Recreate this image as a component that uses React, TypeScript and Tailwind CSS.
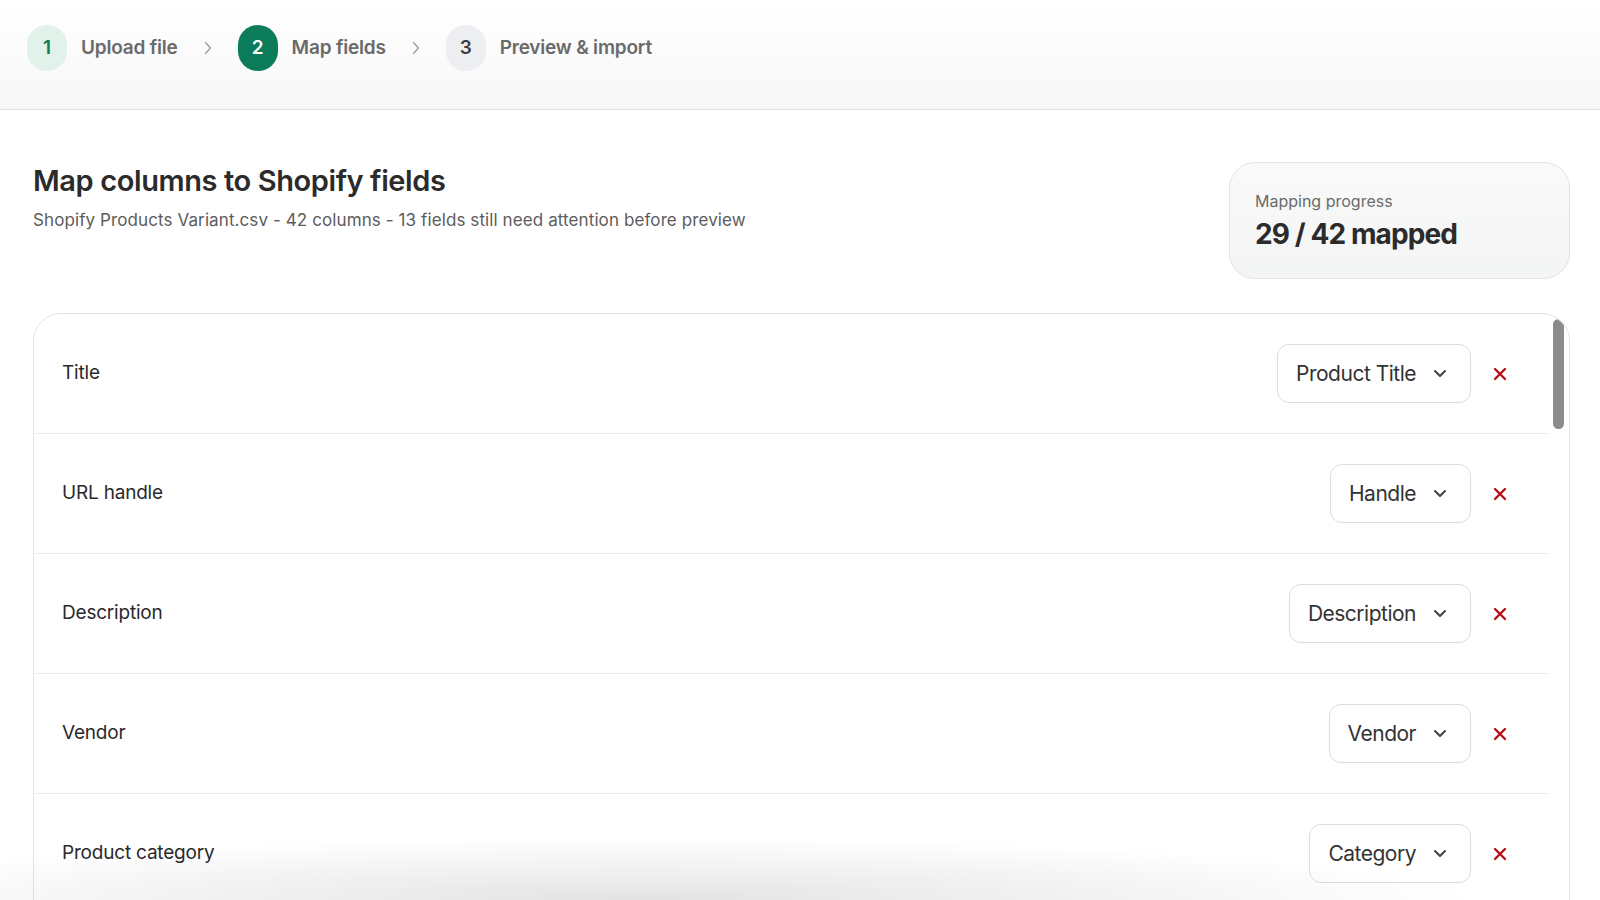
import React from "react";

const rows = [
  { label: "Title", value: "Product Title" },
  { label: "URL handle", value: "Handle" },
  { label: "Description", value: "Description" },
  { label: "Vendor", value: "Vendor" },
  { label: "Product category", value: "Category" },
];

function Chevron() {
  return (
    <svg width="14" height="9" viewBox="0 0 14 9" fill="none" className="shrink-0">
      <path d="M2 2l5 5 5-5" stroke="#444" strokeWidth="2" strokeLinecap="round" strokeLinejoin="round" />
    </svg>
  );
}

function XIcon() {
  return (
    <svg width="14" height="14" viewBox="0 0 14 14" fill="none" className="shrink-0">
      <path d="M2 2l10 10M12 2L2 12" stroke="#b4121b" strokeWidth="2.4" strokeLinecap="round" />
    </svg>
  );
}

function StepChevron() {
  return (
    <svg width="10" height="16" viewBox="0 0 10 16" fill="none">
      <path d="M2.5 2.5L7.5 8l-5 5.5" stroke="#a3a3a3" strokeWidth="1.6" strokeLinecap="round" strokeLinejoin="round" />
    </svg>
  );
}

function Step({ n, label, variant }: { n: number; label: string; variant: "done" | "active" | "todo" }) {
  const circle =
    variant === "done"
      ? "bg-[#e1f2ea] text-[#117a56]"
      : variant === "active"
      ? "bg-[#0c7b59] text-white"
      : "bg-[#eceef1] text-[#3d3d3d]";
  return (
    <div className="flex items-center gap-[14px]">
      <div className={`w-10 h-[46px] rounded-full flex items-center justify-center text-[19px] font-semibold ${circle}`}>
        {n}
      </div>
      <span className="text-[19px] font-semibold tracking-[-0.2px] text-[#6a6a6a]">{label}</span>
    </div>
  );
}

export default function App() {
  return (
    <div className="relative h-[900px] w-full overflow-hidden bg-white font-['Inter',sans-serif] text-[#2a2a2a]">
      <header className="h-[110px] border-b border-[#e4e4e4] bg-gradient-to-b from-white to-[#f7f7f7] flex items-start pt-[25px] pl-[27px] gap-[25px]">
        <Step n={1} label="Upload file" variant="done" />
        <div className="h-[46px] flex items-center"><StepChevron /></div>
        <Step n={2} label="Map fields" variant="active" />
        <div className="h-[46px] flex items-center"><StepChevron /></div>
        <Step n={3} label="Preview & import" variant="todo" />
      </header>

      <main className="pl-[33px] pr-[30px] pt-[52px]">
        <div className="flex items-start justify-between">
          <div className="pt-[2px]">
            <h1 className="text-[29px] leading-[34px] font-semibold tracking-[-0.4px] text-[#2b2b2b]">
              Map columns to Shopify fields
            </h1>
            <p className="mt-[10px] text-[17px] leading-[24px] tracking-[0.1px] text-[#5c5c5c]">
              Shopify Products Variant.csv - 42 columns - 13 fields still need attention before preview
            </p>
          </div>
          <div className="w-[341px] h-[117px] rounded-[26px] border border-[#e3e3e3] bg-gradient-to-b from-[#fafafa] to-[#f3f4f5] px-[25px] pt-[27px]">
            <div className="text-[16px] leading-[22px] text-[#6b6b6b]">Mapping progress</div>
            <div className="mt-[5px] text-[28px] leading-[34px] font-bold tracking-[-0.9px] text-[#2b2b2b]">29 / 42 mapped</div>
          </div>
        </div>

        <div className="mt-[34px] h-[620px] rounded-[28px] border border-[#e4e4e4] bg-white flex overflow-hidden">
          <div className="flex-1 flex flex-col">
            {rows.map((r) => (
              <div
                key={r.label}
                className="h-[120px] shrink-0 border-b border-[#ececec] flex items-center justify-between pl-[28px] pr-[41px]"
              >
                <span className="text-[19px] tracking-[-0.2px] text-[#2a2a2a]">{r.label}</span>
                <div className="flex items-center gap-[22px]">
                  <div className="h-[59px] rounded-[12px] border border-[#dddddd] bg-white flex items-center pl-[18px] pr-[23px] gap-[17px]">
                    <span className="text-[21px] tracking-[-0.5px] text-[#333333]">{r.value}</span>
                    <Chevron />
                  </div>
                  <XIcon />
                </div>
              </div>
            ))}
          </div>
          <div className="w-[21px] shrink-0 pt-[5px] pl-[5px]">
            <div className="w-[11px] h-[110px] rounded-full bg-[#8b8b8b]" />
          </div>
        </div>
      </main>

      <div className="pointer-events-none absolute bottom-0 left-0 right-0 h-[90px] bg-[radial-gradient(ellipse_75%_100%_at_40%_100%,rgba(0,0,0,0.11),transparent_70%)]" />
    </div>
  );
}
